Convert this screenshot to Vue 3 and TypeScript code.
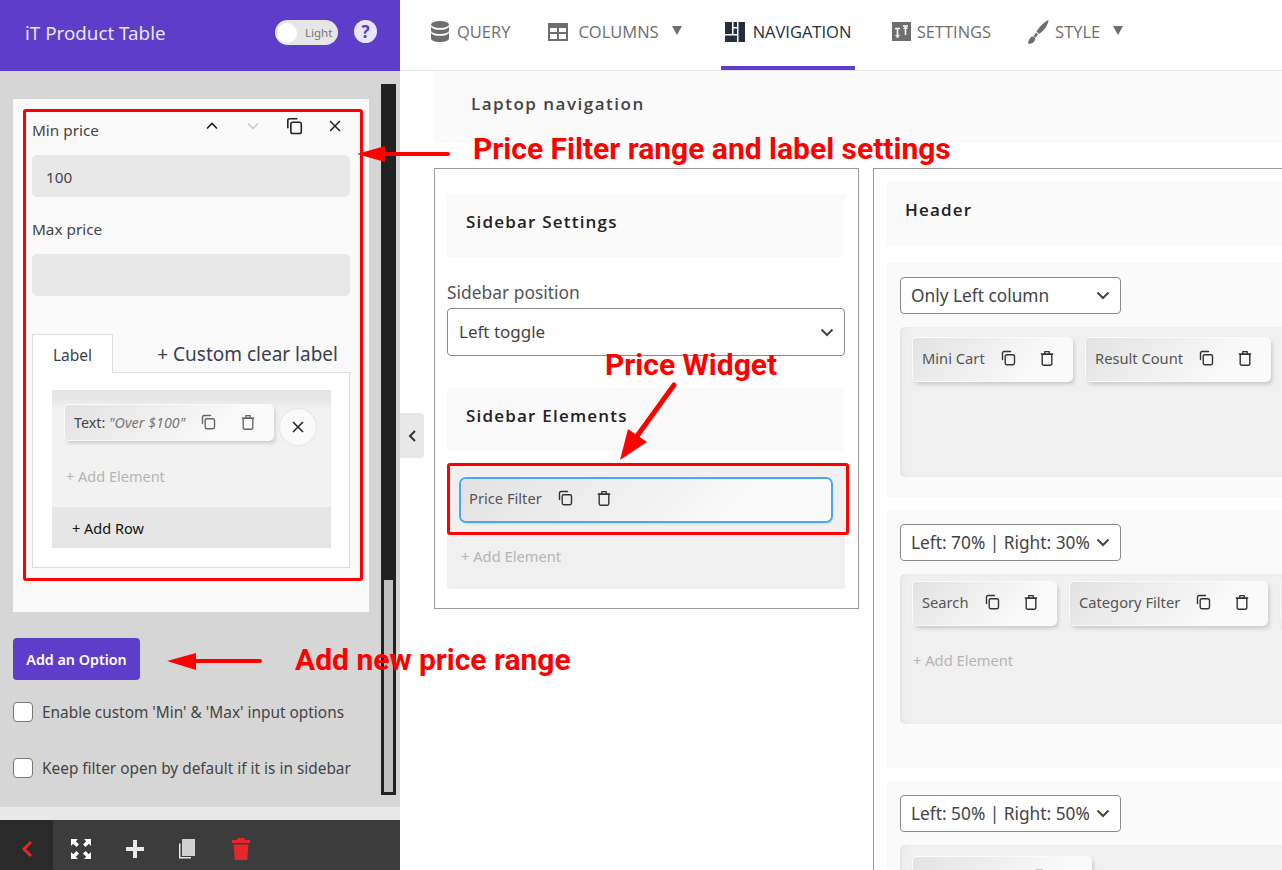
<script setup lang="ts">
interface NavItem {
	label: string;
	icon: string;
	caret?: boolean;
	active?: boolean;
}

interface Chip {
	label: string;
	width: number;
}

interface LayoutRow {
	select: string;
	height: number;
	chipTop: number;
	chips: Chip[];
	addElement?: boolean;
}

const navItems: NavItem[] = [
	{ label: 'QUERY', icon: 'db' },
	{ label: 'COLUMNS', icon: 'table', caret: true },
	{ label: 'NAVIGATION', icon: 'nav', active: true },
	{ label: 'SETTINGS', icon: 'sliders' },
	{ label: 'STYLE', icon: 'brush', caret: true },
];

const rows: LayoutRow[] = [
	{
		select: 'Only Left column',
		height: 234,
		chipTop: 11,
		chips: [
			{ label: 'Mini Cart', width: 159 },
			{ label: 'Result Count', width: 184 },
		],
	},
	{
		select: 'Left: 70% | Right: 30%',
		height: 258,
		chipTop: 8,
		addElement: true,
		chips: [
			{ label: 'Search', width: 143 },
			{ label: 'Category Filter', width: 197 },
			{ label: 'Sort By', width: 160 },
		],
	},
	{
		select: 'Left: 50% | Right: 50%',
		height: 200,
		chipTop: 12,
		chips: [{ label: 'Action Button', width: 178 }],
	},
];
</script>

<template>
	<div class="page">
		<svg class="defs" aria-hidden="true">
			<symbol id="i-copy" viewBox="0 0 16 16">
				<path d="M2.5 9.5V3A1.5 1.5 0 0 1 4 1.5h6.5" fill="none" stroke="currentColor" stroke-width="1.4" stroke-linecap="round" />
				<rect x="5.2" y="4.7" width="9.3" height="10" rx="1.6" fill="none" stroke="currentColor" stroke-width="1.4" />
			</symbol>
			<symbol id="i-trash" viewBox="0 0 16 16">
				<path d="M3.2 4.2h9.6v9.6a1.5 1.5 0 0 1-1.5 1.5H4.7a1.5 1.5 0 0 1-1.5-1.5zM1.8 4h12.4M5.8 4V1.6h4.4V4" fill="none" stroke="currentColor" stroke-width="1.4" stroke-linejoin="round" />
			</symbol>
		</svg>

		<aside class="sidebar">
			<header class="brand">
				<span class="brand-title">iT Product Table</span>
				<div class="toggle">
					<span class="knob"></span>
					<span class="toggle-text">Light</span>
				</div>
				<span class="help">?</span>
			</header>

			<div class="side-body">
				<section class="option-card">
					<div class="field-head">
						<span>Min price</span>
						<div class="field-tools">
							<svg width="14" height="14" viewBox="0 0 14 14"><path d="M2 9.5 7 4.5l5 5" fill="none" stroke="#222" stroke-width="1.7" /></svg>
							<svg class="off" width="14" height="14" viewBox="0 0 14 14"><path d="M2 4.5 7 9.5l5-5" fill="none" stroke="#c8c8c8" stroke-width="1.4" /></svg>
							<svg width="18" height="18"><use href="#i-copy" /></svg>
							<svg width="14" height="14" viewBox="0 0 14 14"><path d="M2 2l10 10M12 2 2 12" fill="none" stroke="#222" stroke-width="1.5" /></svg>
						</div>
					</div>
					<div class="fake-input">100</div>
					<div class="field-label">Max price</div>
					<div class="fake-input"></div>

					<div class="tabs">
						<span class="tab active">Label</span>
						<span class="tab">+ Custom clear label</span>
					</div>
					<div class="tab-panel">
						<div class="builder">
							<div class="builder-row">
								<div class="chip text-chip">
									<span class="chip-label">Text: <em>"Over $100"</em></span>
									<svg class="ic first" width="16" height="16"><use href="#i-copy" /></svg>
									<svg class="ic" width="16" height="16"><use href="#i-trash" /></svg>
								</div>
								<span class="round-x">
									<svg width="14" height="14" viewBox="0 0 14 14"><path d="M2 2l10 10M12 2 2 12" fill="none" stroke="#222" stroke-width="1.5" /></svg>
								</span>
							</div>
							<div class="add-el small">+ Add Element</div>
							<div class="add-row">+ Add Row</div>
						</div>
					</div>
				</section>

				<button class="add-option" type="button">Add an Option</button>
				<label class="check first"><span class="box"></span><span class="check-text">Enable custom 'Min' &amp; 'Max' input options</span></label>
				<label class="check second"><span class="box"></span><span class="check-text">Keep filter open by default if it is in sidebar</span></label>
			</div>

			<div class="side-band"></div>
			<footer class="side-bar">
				<span class="back">
					<svg width="14" height="20" viewBox="0 0 14 20"><path d="M11 3 4 10l7 7" fill="none" stroke="#e5262b" stroke-width="3" /></svg>
				</span>
				<svg class="tool t-full" width="22" height="22" viewBox="0 0 22 22" fill="#fff">
					<path d="M1 1h7L5.8 3.2 9 6.400 6.400 9 3.200 5.800 1 8zM21 1v7l-2.200-2.200L15.600 9 13 6.400l3.200-3.200L14 1zM1 21v-7l2.200 2.200L6.400 13 9 15.600l-3.200 3.200L8 21zM21 21h-7l2.200-2.200L13 15.600l2.600-2.600 3.200 3.200L21 14z" />
				</svg>
				<svg class="tool t-plus" width="18" height="18" viewBox="0 0 18 18"><path d="M7 0h4v7h7v4h-7v7H7v-7H0V7h7z" fill="#e8e8e8" /></svg>
				<svg class="tool t-copy" width="18" height="22" viewBox="0 0 18 22">
					<path d="M1 5.500h1.500V19H13v1.500H1z" fill="#e8e8e8" />
					<path d="M4 1h13v17H4z" fill="#d0d0d0" />
				</svg>
				<svg class="tool t-trash" width="18" height="22" viewBox="0 0 18 22" fill="#e5262b">
					<path d="M6 0h6l1 2h5v3H0V2h5zM1.500 6.500h15L15.300 22H2.700z" />
				</svg>
			</footer>

			<div class="scrollbar"><span class="thumb"></span></div>
		</aside>

		<main class="main">
			<nav class="topnav">
				<div v-for="item in navItems" :key="item.label" class="nav-item" :class="[item.icon, { active: item.active }]">
					<svg v-if="item.icon === 'db'" width="18" height="21" viewBox="0 0 18 21" fill="currentColor">
						<ellipse cx="9" cy="3.500" rx="9" ry="3.500" />
						<path d="M0 6c1.500 2 5 2.800 9 2.800S16.500 8 18 6v3.500c0 2-4 3.500-9 3.500s-9-1.500-9-3.500zM0 12c1.500 2 5 2.800 9 2.800s7.500-.8 9-2.800v5.500c0 2-4 3.500-9 3.500s-9-1.500-9-3.500z" />
					</svg>
					<svg v-else-if="item.icon === 'table'" width="20" height="18" viewBox="0 0 20 18" fill="currentColor">
						<path fill-rule="evenodd" d="M0 0h20v18H0zM2 5v4h7V5zm9 0v4h7V5zM2 11v5h7v-5zm9 0v5h7v-5z" />
					</svg>
					<svg v-else-if="item.icon === 'nav'" width="20" height="20" viewBox="0 0 20 20" fill="currentColor">
						<path d="M0 0h7v12H0zM8.500 0h3.500v5H8.500zM8.500 6.500h3.500V12H8.500zM13.500 0H20v20h-6.500zM0 13.500h12V20H0z" />
					</svg>
					<svg v-else-if="item.icon === 'sliders'" width="19" height="19" viewBox="0 0 19 19">
						<rect width="19" height="19" fill="currentColor" />
						<path d="M3 6.500h5M5.500 6.500v9M11 4h5M13.500 4v9" stroke="#fff" stroke-width="1.600" fill="none" />
						<path d="M3 13l2.500 3L8 13zM11 7l2.500-3L16 7z" fill="#fff" />
					</svg>
					<svg v-else width="21" height="24" viewBox="0 0 21 24" fill="currentColor">
						<path d="M20.500 0c-.2 4.500-4 10.500-9.500 14L8.500 11.500C11.500 6.500 16 2 20.500 0zM8 12.500l2 2-2.500 3.200-2-1.700zM4.500 16.500c2 0 3 1.700 2.500 3.500-.6 2.200-3 3.800-5.700 3.800-1.200 0-1.500-1-1-2 .9-1.900 1.800-5.300 4.200-5.300z" />
					</svg>
					<span class="nav-text">{{ item.label }}</span>
					<span v-if="item.caret" class="caret"></span>
				</div>
			</nav>

			<div class="laptop-strip">Laptop navigation</div>

			<div class="columns">
				<section class="sidebar-box">
					<div class="block-title">Sidebar Settings</div>
					<div class="pos-label">Sidebar position</div>
					<div class="select wide">
						<span>Left toggle</span>
						<svg width="14" height="9" viewBox="0 0 14 9"><path d="M1.500 1.500 7 7l5.500-5.500" fill="none" stroke="#444" stroke-width="2" /></svg>
					</div>
					<div class="block-title second">Sidebar Elements</div>
					<div class="drop-area">
						<div class="chip focused">
							<span class="chip-label">Price Filter</span>
							<svg class="ic first" width="16" height="16"><use href="#i-copy" /></svg>
							<svg class="ic" width="16" height="16"><use href="#i-trash" /></svg>
						</div>
						<div class="add-el">+ Add Element</div>
					</div>
				</section>

				<section class="layout-box">
					<div class="block-title header-title">Header</div>
					<div v-for="row in rows" :key="row.select" class="layout-row" :style="{ height: row.height + 'px' }">
						<div class="select narrow">
							<span>{{ row.select }}</span>
							<svg width="14" height="9" viewBox="0 0 14 9"><path d="M1.500 1.500 7 7l5.500-5.500" fill="none" stroke="#444" stroke-width="2" /></svg>
						</div>
						<div class="column-area" :style="{ paddingTop: row.chipTop + 'px' }">
							<div class="chip-row">
								<div v-for="chip in row.chips" :key="chip.label" class="chip" :style="{ width: chip.width + 'px' }">
									<span class="chip-label">{{ chip.label }}</span>
									<svg class="ic first" width="16" height="16"><use href="#i-copy" /></svg>
									<svg class="ic" width="16" height="16"><use href="#i-trash" /></svg>
								</div>
							</div>
							<div v-if="row.addElement" class="add-el wide-add">+ Add Element</div>
						</div>
					</div>
				</section>
			</div>

			<span class="collapse">
				<svg width="9" height="14" viewBox="0 0 9 14"><path d="M7 2 2 7l5 5" fill="none" stroke="#333" stroke-width="2" /></svg>
			</span>
		</main>

		<!-- red screenshot annotations -->
		<div class="mark mark-card"></div>
		<div class="mark mark-widget"></div>
		<span class="note note-range">Price Filter range and label settings</span>
		<span class="note note-widget">Price Widget</span>
		<span class="note note-add">Add new price range</span>
		<svg class="arrows" width="1282" height="870" viewBox="0 0 1282 870" fill="#ff0000" stroke="#ff0000" stroke-linecap="round">
			<path d="M385 154h63" stroke-width="4" />
			<path d="M357 154l28-8v16z" stroke="none" />
			<path d="M195 661h65" stroke-width="4" />
			<path d="M167 661l29-8v17z" stroke="none" />
			<path d="M674 385l-42 58" stroke-width="5" />
			<path d="M620 460l8-31 19 13z" stroke="none" />
		</svg>
	</div>
</template>

<style>
html,
body {
	margin: 0;
	background: #fff;
}
</style>

<style scoped>
.page {
	position: relative;
	display: grid;
	grid-template-columns: 400px 1fr;
	width: 1282px;
	height: 870px;
	overflow: hidden;
	font-family: "Noto Sans", "Open Sans", sans-serif;
	color: #444;
}

.defs {
	position: absolute;
	width: 0;
	height: 0;
}

/* left panel */
.sidebar {
	position: relative;
	display: flex;
	flex-direction: column;
	height: 870px;
	background: #d6d6d6;
}

.brand {
	display: flex;
	align-items: center;
	flex-shrink: 0;
	height: 71px;
	padding: 0 23px 6px 25px;
	box-sizing: border-box;
	background: #5e3dcb;
}

.brand-title {
	flex: 1;
	font-size: 18.8px;
	color: #e9e5fb;
}

.toggle {
	display: flex;
	align-items: center;
	width: 63px;
	height: 25px;
	padding: 0 2px;
	box-sizing: border-box;
	border-radius: 13px;
	background: #e6e6e6;
}

.knob {
	width: 20px;
	height: 20px;
	border-radius: 50%;
	background: #fff;
}

.toggle-text {
	margin-left: 8px;
	font-size: 11.5px;
	color: #777;
}

.help {
	display: flex;
	align-items: center;
	justify-content: center;
	width: 23px;
	height: 23px;
	margin-left: 16px;
	margin-bottom: 2px;
	border-radius: 50%;
	background: #e9e5fb;
	color: #5e3dcb;
	font-size: 17px;
	font-weight: 700;
}

.side-body {
	flex: 1;
	padding: 28px 0 0 13px;
}

.option-card {
	width: 356px;
	padding: 16px 19px 44px;
	box-sizing: border-box;
	background: #fafafa;
}

.field-head {
	display: flex;
	align-items: center;
	justify-content: space-between;
	height: 30px;
	margin-bottom: 10px;
	font-size: 15.3px;
	line-height: 28px;
}

.field-tools {
	display: flex;
	align-items: center;
	margin: -8px 8px 0 0;
	color: #222;
}

.field-tools svg + svg {
	margin-left: 27px;
}

.field-tools .off + svg,
.field-tools svg:last-child {
	margin-left: 25px;
}

.fake-input {
	height: 42px;
	padding-left: 14px;
	border-radius: 5px;
	background: #e8e8e8;
	font-size: 15.3px;
	line-height: 44px;
}

.field-label {
	height: 25px;
	margin: 20px 0 12px;
	font-size: 15.3px;
	line-height: 25px;
}

.tabs {
	display: flex;
	justify-content: space-between;
	margin-top: 38px;
	height: 38px;
}

.tab {
	margin-right: 12px;
	font-size: 19px;
	line-height: 40px;
	color: #3a4050;
}

.tab.active {
	position: relative;
	z-index: 1;
	width: 81px;
	height: 39px;
	margin-right: 0;
	box-sizing: border-box;
	padding-left: 20px;
	background: #fff;
	border: 1px solid #ddd;
	border-bottom: 0;
	font-size: 15.5px;
}

.tab-panel {
	height: 196px;
	padding: 17px 18px 0 19px;
	box-sizing: border-box;
	background: #fff;
	border: 1px solid #ddd;
}

.builder {
	height: 158px;
	display: flex;
	flex-direction: column;
	background: linear-gradient(#e6e6e6 8px, #f2f2f2 20px);
}

.builder-row {
	display: flex;
	padding: 15px 0 0 13px;
}

.chip {
	display: flex;
	align-items: center;
	flex-shrink: 0;
	height: 43px;
	padding: 0 0 3px 9px;
	box-sizing: border-box;
	border-radius: 4px;
	background: linear-gradient(135deg, #e2e2e2, #fafafa 75%);
	box-shadow: 0 0 0 1px #fafafa, 2px 3px 4px rgba(0, 0, 0, 0.18);
	color: #555;
}

.chip-label {
	font-size: 14.7px;
	white-space: nowrap;
}

.ic {
	margin-left: 23px;
	color: #333;
}

.ic.first {
	margin-left: 15px;
}

.text-chip {
	width: 208px;
	height: 35px;
	padding: 0 0 1px 9px;
}

.text-chip .chip-label {
	font-size: 14.3px;
	color: #444;
}

.text-chip em {
	color: #777;
}

.text-chip .ic {
	margin-left: 24px;
	color: #666;
}

.text-chip .ic.first {
	margin-left: 15px;
}

.round-x {
	display: flex;
	align-items: center;
	justify-content: center;
	width: 36px;
	height: 36px;
	margin: 4px 0 0 7px;
	border-radius: 50%;
	background: #fafafa;
	box-shadow: 0 0 2px rgba(0, 0, 0, 0.15);
}

.add-el {
	font-size: 14.7px;
	color: #b5b5b5;
}

.add-el.small {
	flex: 1;
	margin: 21px 0 0 14px;
	font-size: 14.5px;
}

.add-row {
	height: 41px;
	padding-left: 20px;
	background: #e6e6e6;
	color: #111;
	font-size: 14.5px;
	line-height: 43px;
}

.add-option {
	display: block;
	width: 127px;
	height: 42px;
	margin-top: 26px;
	padding: 0;
	border: 0;
	border-radius: 4px;
	background: #5e3dcb;
	color: #fff;
	font-family: inherit;
	font-size: 14.3px;
	font-weight: 600;
}

.check {
	display: flex;
	align-items: center;
	height: 20px;
	font-size: 15.4px;
	line-height: 20px;
	color: #444;
}

.check-text {
	padding-top: 2px;
}

.check.first {
	margin-top: 22px;
}

.check.second {
	margin-top: 36px;
}

.box {
	width: 18px;
	height: 18px;
	margin-right: 9px;
	border: 1px solid #777;
	border-radius: 4px;
	background: #fff;
}

.side-band {
	flex-shrink: 0;
	height: 13px;
	background: #e8e8e8;
}

.side-bar {
	display: flex;
	align-items: center;
	flex-shrink: 0;
	height: 50px;
	background: #3c3c3c;
}

.back {
	display: flex;
	align-items: center;
	justify-content: center;
	width: 53px;
	height: 50px;
	padding-top: 8px;
	box-sizing: border-box;
	background: #2a2a2a;
}

.tool {
	margin-top: 8px;
}

.t-full {
	margin-left: 17px;
}

.t-plus {
	margin-left: 34px;
}

.t-copy {
	margin-left: 34px;
}

.t-trash {
	margin-left: 36px;
}

.scrollbar {
	position: absolute;
	left: 381px;
	top: 84px;
	display: flex;
	flex-direction: column;
	justify-content: flex-end;
	width: 15px;
	height: 711px;
	background: #222;
}

.thumb {
	height: 212px;
	margin: 0 3px 3px;
	background: #c0c0c0;
}

/* right side */
.main {
	position: relative;
	min-width: 0;
}

.topnav {
	display: flex;
	height: 71px;
	box-sizing: border-box;
	padding-left: 31px;
	border-bottom: 1px solid #e5e5e5;
}

.nav-item {
	display: flex;
	align-items: center;
	height: 70px;
	box-sizing: border-box;
	padding-bottom: 7px;
	color: #6e6e6e;
}

.nav-text {
	margin-left: 8px;
	font-family: "Open Sans", sans-serif;
	font-size: 16.5px;
	font-weight: 500;
	white-space: nowrap;
}

.nav-item.table {
	margin-left: 38px;
}

.nav-item.table .nav-text {
	margin-left: 10px;
}

.nav-item.nav {
	flex-shrink: 0;
	width: 134px;
	margin-left: 39px;
	padding-left: 4px;
	border-bottom: 4px solid #5e3dcb;
	padding-bottom: 3px;
	color: #262e3e;
}

.nav-item.sliders {
	margin-left: 37px;
}

.nav-item.sliders .nav-text {
	margin-left: 6px;
}

.nav-item.brush {
	margin-left: 37px;
}

.nav-item.brush .nav-text {
	margin-left: 6px;
}

.caret {
	width: 0;
	height: 0;
	margin: 0 0 2px 13px;
	border-left: 5px solid transparent;
	border-right: 5px solid transparent;
	border-top: 9px solid #6e6e6e;
}

.laptop-strip {
	height: 72px;
	margin-left: 34px;
	padding: 21px 0 0 37px;
	box-sizing: border-box;
	background: #fafafa;
	font-family: "Open Sans", sans-serif;
	font-size: 17px;
	font-weight: 600;
	letter-spacing: 1.5px;
	color: #444;
}

.columns {
	display: flex;
	gap: 14px;
	margin: 25px 0 0 34px;
}

.block-title {
	height: 63px;
	padding-left: 19px;
	box-sizing: border-box;
	background: #fafafa;
	font-family: "Open Sans", sans-serif;
	font-size: 17px;
	font-weight: 600;
	letter-spacing: 1.2px;
	line-height: 56px;
	color: #222;
}

.block-title.second {
	margin-top: 32px;
}

.sidebar-box {
	flex-shrink: 0;
	width: 425px;
	height: 441px;
	box-sizing: border-box;
	padding: 25px 13px 0 12px;
	border: 1px solid #999;
}

.pos-label {
	margin-top: 24px;
	font-size: 17.4px;
	line-height: 23px;
	color: #555;
}

.select {
	display: flex;
	align-items: center;
	justify-content: space-between;
	box-sizing: border-box;
	border: 1px solid #8a8a8a;
	border-radius: 4px;
	background: #fff;
	font-size: 17.3px;
	color: #444;
}

.select span {
	margin-top: -1px;
}

.select.wide {
	height: 48px;
	margin-top: 4px;
	padding: 0 10px 0 11px;
	font-size: 17px;
}

.select.narrow {
	width: 221px;
	height: 37px;
	padding: 0 10px 0 10px;
	white-space: nowrap;
}

.drop-area {
	height: 123px;
	margin-top: 15px;
	padding: 13px 14px 0 14px;
	box-sizing: border-box;
	background: #f0f0f0;
	border-radius: 0 0 4px 4px;
}

.chip.focused {
	height: 42px;
	padding: 0 0 5px 8px;
	box-shadow: 0 0 0 2px #4da6f2, 1px 2px 3px rgba(0, 0, 0, 0.2);
	border-radius: 5px;
}

.drop-area .add-el {
	margin: 25px 0 0 0;
}

.layout-box {
	flex: 1;
	min-width: 0;
	height: 720px;
	overflow: hidden;
	padding: 12px 0 0 13px;
	border: 1px solid #999;
	border-right: 0;
	border-bottom: 0;
}

.header-title {
	width: 700px;
	height: 65px;
	padding-left: 18px;
	line-height: 58px;
}

.layout-row {
	width: 700px;
	margin-top: 13px;
	padding: 14px 0 0 13px;
	box-sizing: border-box;
	background: #fafafa;
}

.header-title + .layout-row {
	margin-top: 17px;
}

.column-area {
	height: 150px;
	margin-top: 13px;
	box-sizing: border-box;
	padding-left: 13px;
	border-radius: 5px;
	background: #f0f0f0;
	box-shadow: inset 4px 0 6px -4px rgba(0, 0, 0, 0.1);
}

.chip-row {
	display: flex;
	gap: 14px;
}

.column-area .chip {
	justify-content: flex-start;
}

.wide-add {
	margin-top: 25px;
}

.collapse {
	position: absolute;
	left: 0;
	top: 413px;
	display: flex;
	align-items: center;
	justify-content: center;
	width: 24px;
	height: 45px;
	border-radius: 0 4px 4px 0;
	background: #e8e8e8;
}

/* annotations */
.mark {
	position: absolute;
	box-sizing: border-box;
	border: 3px solid #ff0000;
	border-radius: 3px;
}

.mark-card {
	left: 23px;
	top: 109px;
	width: 340px;
	height: 472px;
}

.mark-widget {
	left: 447px;
	top: 463px;
	width: 402px;
	height: 72px;
}

.note {
	position: absolute;
	font-family: Roboto, sans-serif;
	font-size: 30px;
	font-weight: 700;
	line-height: 34px;
	color: #ff0000;
	white-space: nowrap;
}

.note-range {
	left: 473px;
	top: 132px;
}

.note-widget {
	left: 605px;
	top: 348px;
}

.note-add {
	left: 295px;
	top: 643px;
}

.arrows {
	position: absolute;
	left: 0;
	top: 0;
	pointer-events: none;
}
</style>
